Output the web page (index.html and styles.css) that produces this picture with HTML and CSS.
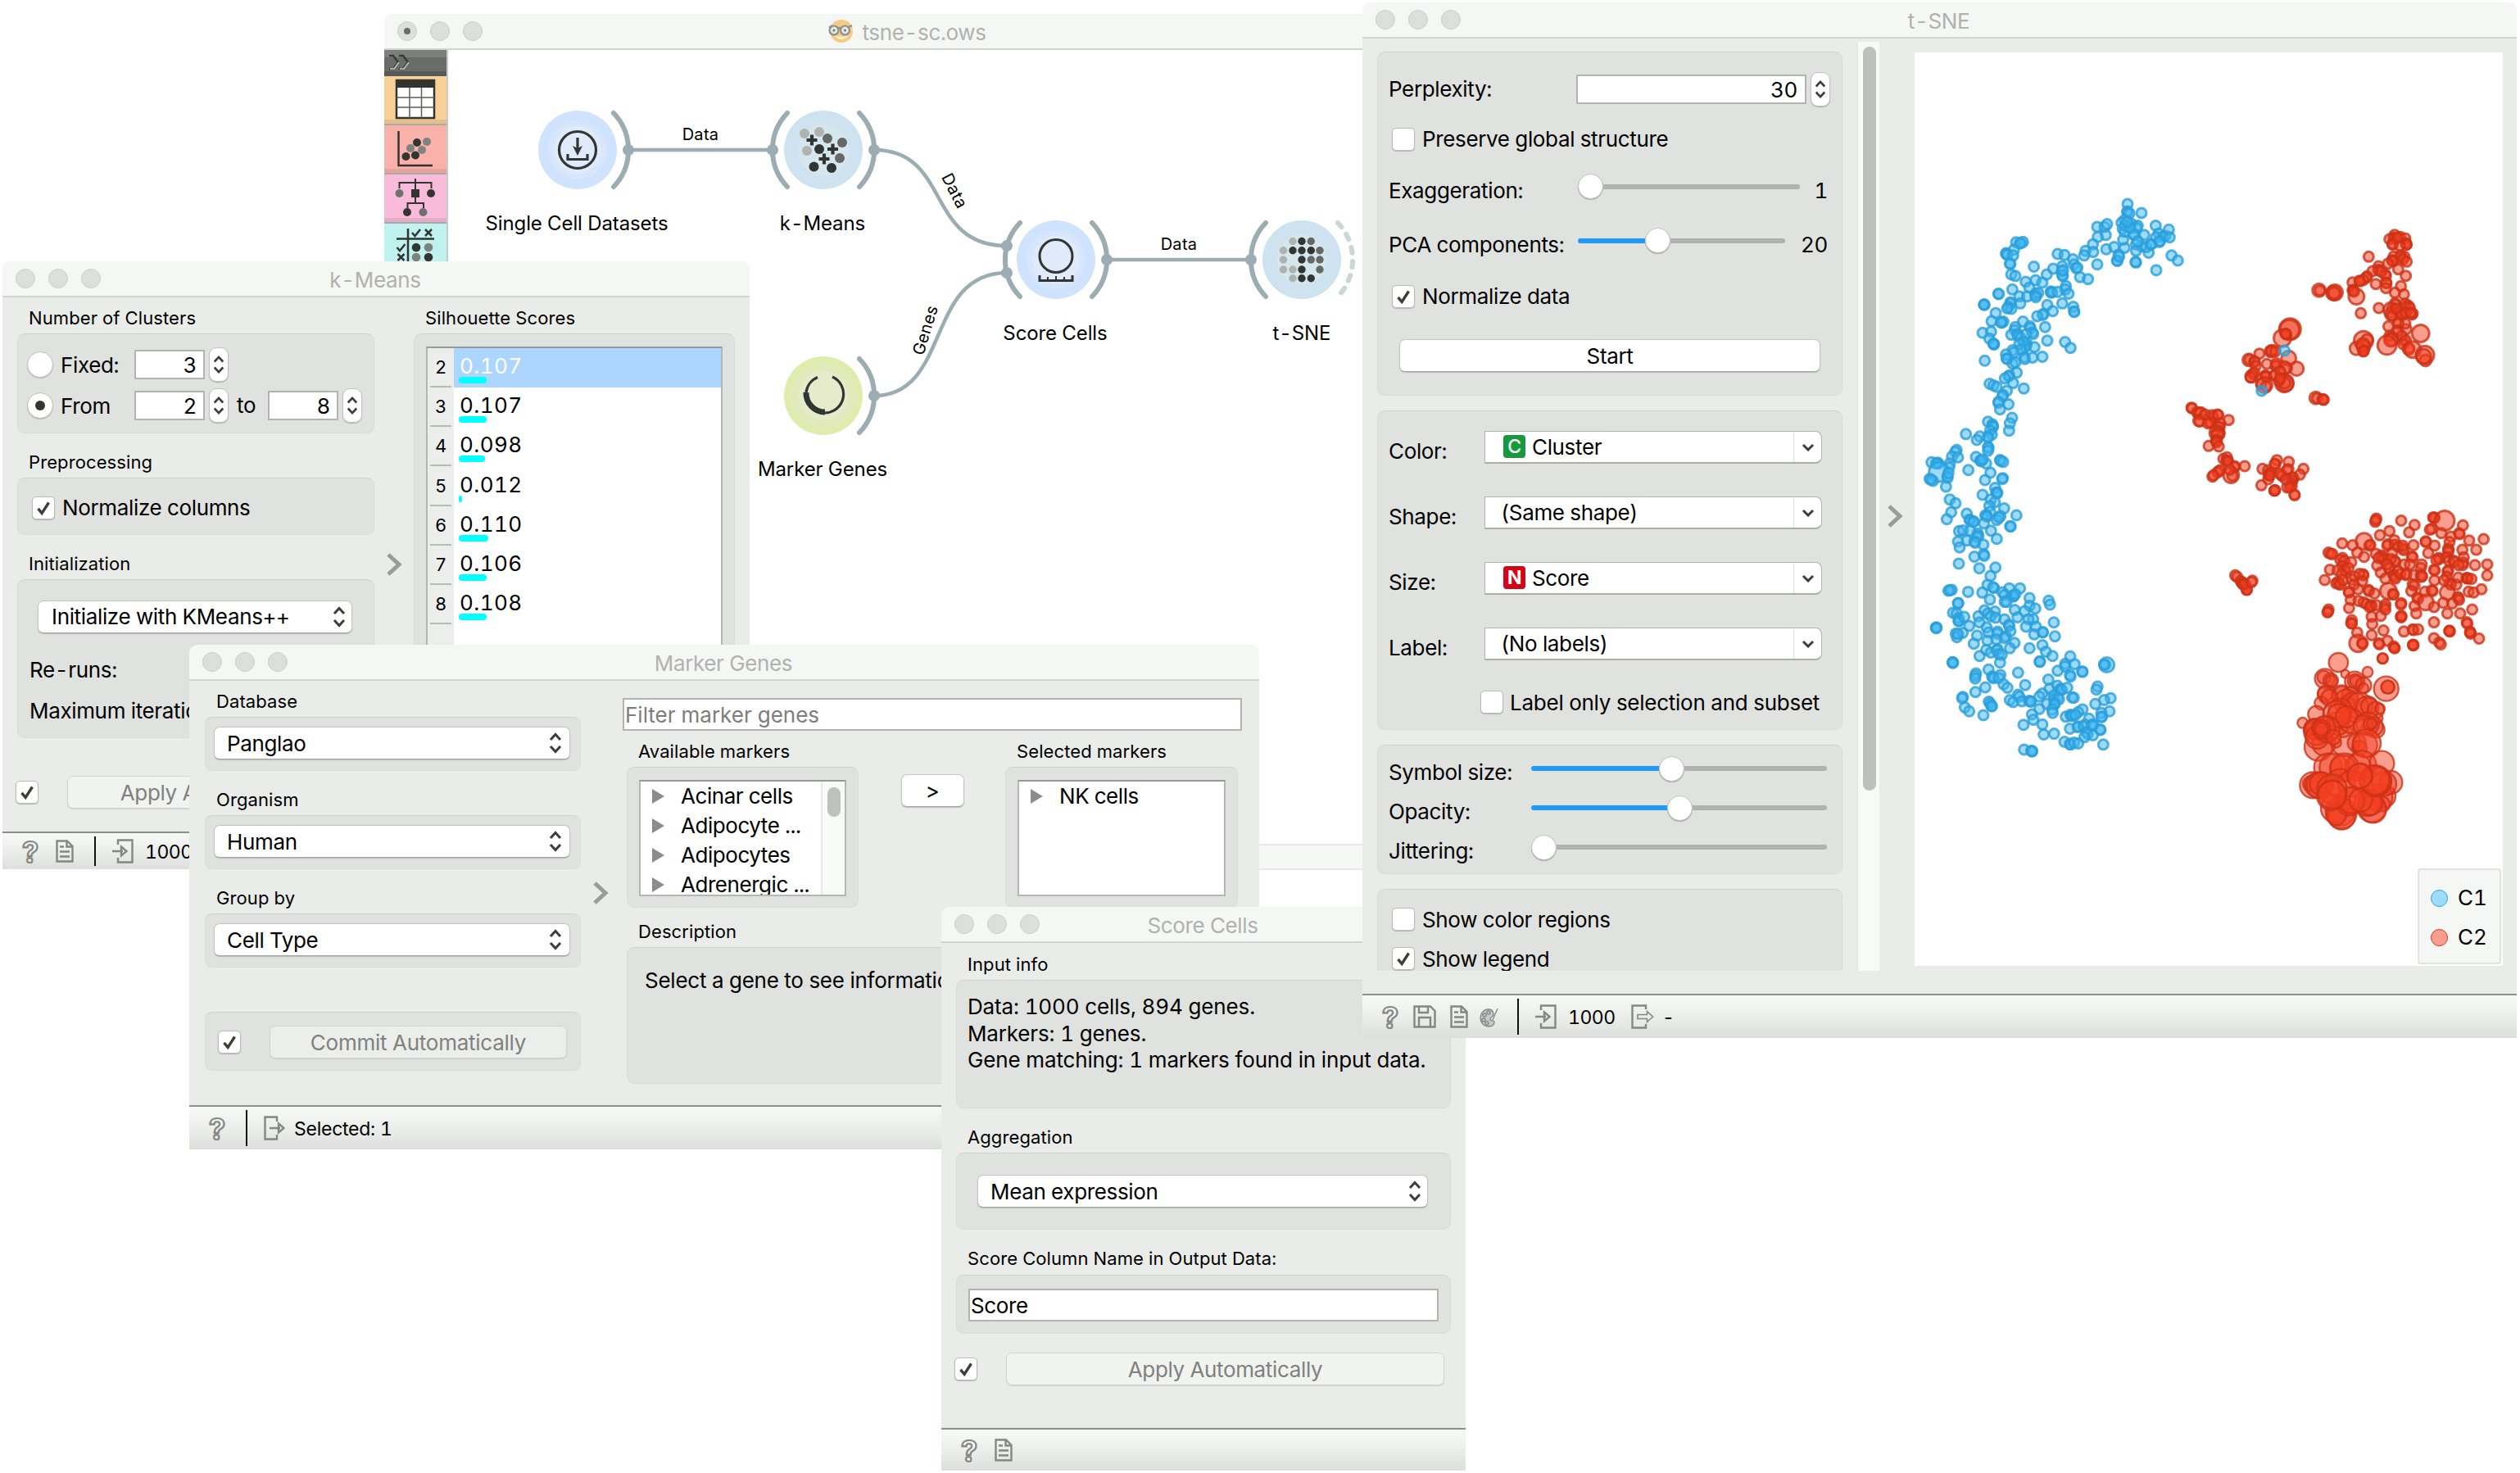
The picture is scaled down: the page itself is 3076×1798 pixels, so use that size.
FILE: index.html
```html
<!DOCTYPE html>
<html lang="en">
<head>
<meta charset="utf-8">
<title>tsne-sc.ows</title>
<link rel="stylesheet" href="styles.css">
</head>
<body>
<svg class="defs" width="0" height="0">
  <symbol id="updown" viewBox="0 0 16 26"><path d="M2 9 8 2.500 14 9M2 17 8 23.500 14 17"/></symbol>
  <symbol id="down" viewBox="0 0 16 10"><path d="M2 2 8 8 14 2"/></symbol>
  <symbol id="split" viewBox="0 0 20 30"><path d="M3 3 16 15 3 27"/></symbol>
  <symbol id="check" viewBox="0 0 28 28"><path d="M7 15 12 21 21 7"/></symbol>
  <symbol id="doc" viewBox="0 0 22 28"><path d="M1.500 1.500H14L20.500 8V26.500H1.500ZM13.500 2V8.500H20M5 8.500H10M5 14.500H17M5 20.500H17"/></symbol>
  <symbol id="save" viewBox="0 0 28 28"><path d="M1.500 1.500H21L26.500 7V26.500H1.500ZM7 2V9H18V2M7 26V15H21V26"/></symbol>
  <symbol id="import" viewBox="0 0 26 30"><path d="M7 7V1.500H24.500V28.500H7V23M0 15H13"/><path class="solid" d="M11 9.500 17.500 15 11 20.500Z"/></symbol>
  <symbol id="export" viewBox="0 0 26 30"><path d="M16 7V1.500H1.500V28.500H16V23M7 15H20"/><path class="solid" d="M18 9.500 24.500 15 18 20.500Z"/></symbol>
  <symbol id="export-empty" viewBox="0 0 28 30"><path d="M18 6V1.500H1.500V28.500H18V24"/><path class="thin" d="M8 12.500H19.500V8.500L26.500 15 19.500 21.500V17.500H8Z"/></symbol>
  <symbol id="palette" viewBox="0 0 24 26"><path d="M11 4C4 4 1 10 1 15S5 25 11 25 18 21 18 19 13 19 13 16 18 13 17 9 14 4 11 4Z" fill="#c3c8c8"/><circle cx="6" cy="11" r="2"/><circle cx="11" cy="8" r="2"/><circle cx="5" cy="17" r="2"/><circle cx="9" cy="21" r="2"/><path d="M22 3 16 17"/></symbol>
</svg>

<section class="window orange">
  <header class="titlebar"><i class="dot dirty"></i><i class="dot"></i><i class="dot"></i>
    <h1><svg class="logo" viewBox="0 0 32 28"><circle cx="17" cy="14" r="14" fill="#f8ca86"/><path d="M8 19Q17 29 26 19Q17 23 8 19Z" fill="#fff3cf"/><g fill="#e3e6e5" stroke="#8e908e" stroke-width="2.200"><circle cx="8" cy="13" r="5.500"/><circle cx="21.500" cy="13" r="5.500"/><path d="M13 11Q15 9 17 11M2 10 6 7M26 9 30 7" fill="none"/></g><circle cx="8" cy="13" r="1.500" fill="#777"/><circle cx="21.500" cy="13" r="1.500" fill="#777"/></svg>tsne-sc.ows</h1></header>
  <div class="workspace">
    <nav class="toolbox">
      <div class="expand"><svg width="28" height="20" viewBox="0 0 28 20" fill="none" stroke-width="2.500"><path d="M2 2H7L13 10 7 18H2M14 2H19L25 10 19 18H14" stroke="#3a3c39"/><path d="M3 18H8L14 10M15 18H20L26 10" stroke="#c9cbc8" stroke-width="1.500"/></svg></div>
      <div class="cat data"><svg viewBox="0 0 76 58"><rect x="15" y="5" width="46" height="46" fill="#fff" stroke="#333532" stroke-width="2.500"/><rect x="14" y="4" width="48" height="10" fill="#333532"/><path d="M31 14V51M45.500 14V51M15 26H61M15 38H61" stroke="#5c5e5b" stroke-width="1.500"/></svg></div>
      <div class="cat vis"><svg viewBox="0 0 76 58"><path d="M17.500 7V49H59" fill="none" stroke="#333532" stroke-width="2.500"/><g fill="#333532"><circle cx="40" cy="21" r="5"/><circle cx="26.500" cy="38" r="5"/><circle cx="38" cy="36.500" r="5"/></g><g fill="#80827f"><circle cx="52" cy="20" r="5"/><circle cx="32" cy="28" r="5"/><circle cx="46" cy="30" r="5"/></g></svg></div>
      <div class="cat model"><svg viewBox="0 0 76 58"><path d="M38 5V18M18.500 17V10H57.500V17M38 28V35M28.500 41V35H48V41" fill="none" stroke="#333532" stroke-width="2"/><g fill="#333532"><rect x="33" y="18" width="10" height="10"/><circle cx="57" cy="23" r="5"/><circle cx="28" cy="46" r="5"/></g><g fill="#6f716e"><circle cx="18.500" cy="23" r="5"/><circle cx="47.500" cy="46" r="5"/></g></svg></div>
      <div class="cat eval"><svg viewBox="0 0 76 58"><g fill="none" stroke="#333532" stroke-width="2.500"><path d="M29 6V50M15 18.500H61M34 11 37.500 15 44 7M50 7 58 15M58 7 50 15M15.500 29 19 33 25.500 25M16.500 37 24.500 45M24.500 37 16.500 45"/></g><g fill="#333532"><circle cx="39" cy="29" r="5.300"/><circle cx="54" cy="41" r="5.300"/></g><g fill="#80827f"><circle cx="54" cy="29" r="5.300"/><circle cx="39" cy="41" r="5.300"/></g></svg></div>
    </nav>
    <svg class="canvas" width="1140" height="969" viewBox="547 61 1140 969">
      <g class="link">
        <path d="M767 183H943M1350 317H1527M1067 183C1161 183 1129 300 1229 300M1067 483C1161 483 1129 333 1229 333"/>
      </g>
      <g class="anchor">
        <path d="M749 138A65 65 0 0 1 749 228M961 138A65 65 0 0 0 961 228M1049 138A65 65 0 0 1 1049 228M1049 438A65 65 0 0 1 1049 528M1245 272A65 65 0 0 0 1245 362M1333 272A65 65 0 0 1 1333 362M1545 272A65 65 0 0 0 1545 362"/>
        <path class="open" d="M1633 272A65 65 0 0 1 1633 362"/>
      </g>
      <g class="port"><circle cx="767" cy="183" r="7"/><circle cx="943" cy="183" r="7"/><circle cx="1067" cy="183" r="7"/><circle cx="1067" cy="483" r="7"/><circle cx="1229" cy="300" r="7"/><circle cx="1229" cy="333" r="7"/><circle cx="1351" cy="317" r="7"/><circle cx="1527" cy="317" r="7"/></g>
      <g transform="translate(705 183)"><circle r="48" fill="#cfe2fe"/><circle r="36" fill="#d7e6fc"/><circle r="29" fill="#dfebfa"/><g fill="none" stroke="#333532" stroke-width="3.200"><circle r="22.500"/><path d="M0-15V2M-12 5V11.500H12V5"/></g><path d="M-6-5 0-2 6-5 0 7Z" fill="#333532"/></g>
      <g transform="translate(1005 183)"><circle r="47.500" fill="#cee2ef" stroke="#c3e3f5"/><circle r="31" fill="#d5e6ec"/><g fill="#b0b2b0"><circle cx="-23" cy="-20" r="6"/><circle cx="-5" cy="-22" r="6"/><circle cx="-20" cy="1" r="6"/></g><g fill="#666865"><circle cx="5" cy="-14" r="6"/><circle cx="23" cy="-9" r="6"/><circle cx="20" cy="10" r="6"/></g><g fill="#333532"><circle cx="-5" cy="-1" r="6"/><circle cx="-11.500" cy="20.500" r="6"/><circle cx="10" cy="22" r="6"/></g><path d="M-20.500-12H-7.500M-14-18.500V-5.500M5-1H18M11.500-7.500V5.500M-5.500 11H7.500M1 4.500V17.500" stroke="#333532" stroke-width="4.200"/></g>
      <g transform="translate(1005 483)"><circle r="48" fill="#e0ecac"/><circle r="40" fill="#e2eabb"/><circle r="30" fill="#e5ebcb"/><path d="M-7-22.500A23 23 0 0 0-21-4M11-23A23 23 0 0 1 2 21" fill="none" stroke="#333532" stroke-width="3.200"/><path d="M-21-4A23 23 0 0 0 2 20" fill="none" stroke="#333532" stroke-width="7"/></g>
      <g transform="translate(1289 317)"><circle r="48" fill="#cfe2fe"/><circle r="36" fill="#d7e6fc"/><circle r="29" fill="#dfebfa"/><g fill="none" stroke="#333532" stroke-width="3"><circle cy="-4.500" r="20"/><path d="M-20 19V25.500H20V19"/><path d="M-10 21V25M0 20V25M10 21V25" stroke-width="2"/></g></g>
      <g transform="translate(1589 317)"><circle r="47.500" fill="#cee2ef" stroke="#c3e3f5"/><circle r="31" fill="#d5e6ec"/><g fill="#b0b2b0"><circle cx="-11" cy="-22.500" r="4.700"/><circle cx="-22.500" cy="-11.300" r="4.700"/><circle cx="-22.500" r="4.700"/><circle cx="-22.500" cy="12" r="4.700"/><circle cx="-11" cy="12" r="4.700"/><circle cx="-11" cy="22.700" r="4.700"/></g><g fill="#666865"><circle cx="11.300" cy="-22.500" r="4.700"/><circle cx="22" cy="-11.300" r="4.700"/><circle cx="11.300" r="4.700"/><circle cx="22" r="4.700"/><circle cx="22" cy="12" r="4.700"/></g><g fill="#333532"><circle cy="-22.500" r="4.700"/><circle cx="-11" cy="-11.300" r="4.700"/><circle cy="-11.300" r="4.700"/><circle cx="11.300" cy="-11.300" r="4.700"/><circle r="4.700"/><circle cy="12" r="4.700"/><circle cy="22.700" r="4.700"/><circle cx="11.300" cy="22.700" r="4.700"/></g></g>
      <g class="names"><text x="704" y="281">Single Cell Datasets</text><text x="1004" y="281">k-Means</text><text x="1288" y="415">Score Cells</text><text x="1589" y="415">t-SNE</text><text x="1004" y="581">Marker Genes</text></g>
      <g class="channels"><text x="855" y="171">Data</text><text x="1439" y="305">Data</text><text transform="translate(1159 236) rotate(63)">Data</text><text transform="translate(1136 405) rotate(-73)">Genes</text></g>
    </svg>
  </div>
  <footer class="canvasbar"></footer>
</section>

<section class="window kmeans">
  <header class="titlebar"><i class="dot"></i><i class="dot"></i><i class="dot"></i><h1>k-Means</h1></header>
  <div class="panes">
    <div class="left">
      <h2 class="first">Number of Clusters</h2>
      <div class="group clusters">
        <div class="row"><i class="radio"></i><span class="rl">Fixed:</span><b class="field num">3</b><i class="stepper"><svg><use href="#updown"/></svg></i></div>
        <div class="row"><i class="radio on"></i><span class="rl">From</span><b class="field num">2</b><i class="stepper"><svg><use href="#updown"/></svg></i><span class="to">to</span><b class="field num">8</b><i class="stepper"><svg><use href="#updown"/></svg></i></div>
      </div>
      <h2>Preprocessing</h2>
      <div class="group pre"><i class="box"><svg><use href="#check"/></svg></i><span>Normalize columns</span></div>
      <h2>Initialization</h2>
      <div class="group init"><div class="select">Initialize with KMeans++<svg><use href="#updown"/></svg></div><p>Re-runs:</p><p>Maximum iterations:</p></div>
      <div class="auto"><i class="box"><svg><use href="#check"/></svg></i><div class="button off">Apply Automatically</div></div>
    </div>
    <svg class="splitter"><use href="#split"/></svg>
    <div class="right">
      <h2 class="first">Silhouette Scores</h2>
      <div class="group scores"><div class="table">
        <div class="tr sel"><b>2</b><span>0.107<i style="width:34px"></i></span></div>
        <div class="tr"><b>3</b><span>0.107<i style="width:34px"></i></span></div>
        <div class="tr"><b>4</b><span>0.098<i style="width:32px"></i></span></div>
        <div class="tr"><b>5</b><span>0.012<i style="width:4px"></i></span></div>
        <div class="tr"><b>6</b><span>0.110<i style="width:36px"></i></span></div>
        <div class="tr"><b>7</b><span>0.106<i style="width:34px"></i></span></div>
        <div class="tr"><b>8</b><span>0.108<i style="width:34px"></i></span></div>
        <div class="rest"></div>
      </div></div>
    </div>
  </div>
  <footer class="status"><span class="help">?</span><svg class="i-doc"><use href="#doc"/></svg><i class="sep"></i><svg class="i-io"><use href="#import"/></svg><span>1000</span></footer>
</section>

<section class="window marker">
  <header class="titlebar"><i class="dot"></i><i class="dot"></i><i class="dot"></i><h1>Marker Genes</h1></header>
  <div class="panes">
    <div class="left">
      <h2 class="first">Database</h2><div class="group one"><div class="select">Panglao<svg><use href="#updown"/></svg></div></div>
      <h2>Organism</h2><div class="group one"><div class="select">Human<svg><use href="#updown"/></svg></div></div>
      <h2>Group by</h2><div class="group one"><div class="select">Cell Type<svg><use href="#updown"/></svg></div></div>
      <div class="group commit"><i class="box"><svg><use href="#check"/></svg></i><div class="button off">Commit Automatically</div></div>
    </div>
    <svg class="splitter"><use href="#split"/></svg>
    <div class="right">
      <div class="field filter">Filter marker genes</div>
      <div class="lists">
        <div class="avail"><h3>Available markers</h3><div class="group lg"><div class="list"><ul><li>Acinar cells</li><li>Adipocyte ...</li><li>Adipocytes</li><li>Adrenergic ...</li></ul><div class="track"><i></i></div></div></div></div>
        <div class="button move">&gt;</div>
        <div class="chosen"><h3>Selected markers</h3><div class="group lg"><div class="list"><ul><li>NK cells</li></ul></div></div></div>
      </div>
      <h3 class="desc">Description</h3>
      <div class="group info">Select a gene to see information</div>
    </div>
  </div>
  <footer class="status"><span class="help">?</span><i class="sep"></i><svg class="i-io"><use href="#export"/></svg><span class="selcount">Selected: 1</span></footer>
</section>

<section class="window score">
  <header class="titlebar"><i class="dot"></i><i class="dot"></i><i class="dot"></i><h1>Score Cells</h1></header>
  <div class="body">
    <h2 class="first">Input info</h2>
    <div class="group input">Data: 1000 cells, 894 genes.<br>Markers: 1 genes.<br>Gene matching: 1 markers found in input data.</div>
    <h2>Aggregation</h2>
    <div class="group agg"><div class="select">Mean expression<svg><use href="#updown"/></svg></div></div>
    <h2 class="wide">Score Column Name in Output Data:</h2>
    <div class="group col"><div class="field">Score</div></div>
    <div class="auto"><i class="box"><svg><use href="#check"/></svg></i><div class="button off">Apply Automatically</div></div>
  </div>
  <footer class="status"><span class="help">?</span><svg class="i-doc"><use href="#doc"/></svg></footer>
</section>

<section class="window tsne">
  <header class="titlebar"><i class="dot"></i><i class="dot"></i><i class="dot"></i><h1>t-SNE</h1></header>
  <div class="panes">
    <div class="controls">
      <div class="group g1">
        <div class="row r1"><span>Perplexity:</span><b class="field num">30</b><i class="stepper"><svg><use href="#updown"/></svg></i></div>
        <div class="row chk r2"><i class="box"></i><span>Preserve global structure</span></div>
        <div class="row r3"><span class="lb">Exaggeration:</span><div class="slider exag"><i class="fill" style="width:0"></i><i class="thumb"></i><i class="trk"></i></div><span class="val">1</span></div>
        <div class="row r4"><span class="lb">PCA components:</span><div class="slider pca"><i class="fill" style="width:82px"></i><i class="thumb"></i><i class="trk"></i></div><span class="val">20</span></div>
        <div class="row chk r5"><i class="box"><svg><use href="#check"/></svg></i><span>Normalize data</span></div>
        <div class="button start">Start</div>
      </div>
      <div class="group g2">
        <div class="row"><span>Color:</span><div class="combo"><em class="c">C</em>Cluster<i><svg><use href="#down"/></svg></i></div></div>
        <div class="row"><span>Shape:</span><div class="combo plain">(Same shape)<i><svg><use href="#down"/></svg></i></div></div>
        <div class="row"><span>Size:</span><div class="combo"><em class="n">N</em>Score<i><svg><use href="#down"/></svg></i></div></div>
        <div class="row"><span>Label:</span><div class="combo plain">(No labels)<i><svg><use href="#down"/></svg></i></div></div>
        <div class="row only"><i class="box"></i><em>Label only selection and subset</em></div>
      </div>
      <div class="group g3">
        <div class="row"><span>Symbol size:</span><div class="slider"><i class="fill" style="width:156px"></i><i class="thumb"></i><i class="trk"></i></div></div>
        <div class="row"><span>Opacity:</span><div class="slider"><i class="fill" style="width:166px"></i><i class="thumb"></i><i class="trk"></i></div></div>
        <div class="row"><span>Jittering:</span><div class="slider"><i class="fill" style="width:0"></i><i class="thumb"></i><i class="trk"></i></div></div>
      </div>
      <div class="group g4">
        <div class="row chk"><i class="box"></i><span>Show color regions</span></div>
        <div class="row chk"><i class="box"><svg><use href="#check"/></svg></i><span>Show legend</span></div>
      </div>
    </div>
    <div class="vscroll"><i></i></div>
    <svg class="splitter"><use href="#split"/></svg>
    <div class="plot">
      <svg id="points" width="718" height="1115" viewBox="2337 64 718 1115"></svg>
      <div class="legend"><div><i class="c1"></i>C1</div><div><i class="c2"></i>C2</div></div>
    </div>
  </div>
  <footer class="status"><span class="help">?</span><svg class="i-save"><use href="#save"/></svg><svg class="i-doc"><use href="#doc"/></svg><svg class="i-pal"><use href="#palette"/></svg><i class="sep"></i><svg class="i-io"><use href="#import"/></svg><span class="cnt">1000</span><svg class="i-io2"><use href="#export-empty"/></svg><span>-</span></footer>
</section>
<script src="script.js"></script>
</body>
</html>
```
FILE: styles.css
```css
* { box-sizing: border-box; }
html, body { margin: 0; }
body { position: relative; width: 3076px; height: 1798px; overflow: hidden; background: #fff; color: #000; font: 400 26px/32px Inter, "Liberation Sans", sans-serif; font-variant-numeric: tabular-nums; letter-spacing: -0.35px; }
i, em { font-style: normal; }
b { font-weight: 400; }
i { display: block; flex: none; }
p, h1, h2, h3, ul { margin: 0; padding: 0; font-weight: 400; }
svg { display: block; flex: none; }
.defs { position: absolute; }

/* windows on the desktop */
.window { position: absolute; display: flex; flex-direction: column; overflow: hidden; background: #eaece9; border-radius: 10px 10px 0 0; white-space: nowrap; }
.orange { left: 469px; top: 17px; width: 1230px; height: 1045px; background: #fff; }
.kmeans { left: 3px; top: 319px; width: 912px; height: 742px; }
.marker { left: 231px; top: 787px; width: 1306px; height: 616px; }
.score { left: 1149px; top: 1107px; width: 640px; height: 688px; }
.tsne { left: 1663px; top: 3px; width: 1409px; height: 1264px; }
.titlebar { display: grid; grid-template-columns: 24px 24px 24px 1fr; column-gap: 16px; flex: none; align-items: center; height: 44px; padding-left: 16px; background: #f5f7f4; border-bottom: 2px solid #d2d4d1; }
.titlebar h1 { display: flex; justify-content: center; align-items: center; margin-left: -138px; padding-top: 3px; font-size: 26px; color: #b0b2af; }
.dot { width: 24px; height: 24px; border-radius: 50%; background: #dddfdc; border: 1px solid #ccceca; }
.dirty { padding: 7px; }
.dirty::after { content: ""; display: block; width: 8px; height: 8px; border-radius: 50%; background: #6b6d6a; }
.orange .titlebar h1 { margin-left: -90px; }
.logo { width: 32px; height: 28px; margin-right: 10px; margin-top: -3px; }
.panes { display: flex; flex: 1; min-height: 0; }

.status { display: flex; flex: none; align-items: center; height: 46px; border-top: 2px solid #8c8e8b; background: linear-gradient(#f8faf7, #e9ebe8 60%, #dddfdc); font-size: 23px; letter-spacing: -0.5px; }
.marker .status { height: 54px; }
.score .status { height: 52px; }
.tsne .status { height: 54px; }
.status span { padding-top: 1px; }
.status svg { fill: none; stroke: #858784; stroke-width: 2.4px; }
.status .solid { fill: #6d6f6c; stroke: none; }
.thin { stroke-width: 1.6px; }
.help { width: 20px; margin-left: 24px; font-weight: 700; font-size: 36px; color: #f0f2ef; -webkit-text-stroke: 2.2px #858784; }
.i-doc { width: 22px; height: 28px; margin-left: 21px; }
.i-io { width: 26px; height: 30px; margin-left: 20px; margin-right: 14px; }
.sep { width: 2px; height: 44px; background: #111; margin-left: 25px; }
.kmeans .sep { height: 36px; }
.marker .i-io { margin-right: 11px; }
.selcount { letter-spacing: -0.25px; }
.i-save { width: 28px; height: 28px; margin-left: 18px; }
.tsne .i-doc { margin-left: 17px; }
.i-pal { width: 24px; height: 26px; margin-left: 14px; }
#palette * { stroke-width: 1.3px; }
.tsne .sep { margin-left: 22px; }
.cnt { width: 63px; }
.i-io2 { width: 28px; height: 30px; margin: 0 10px 0 14px; }

/* shared controls */
.group { background: #e0e2df; border: 1px solid #d9dbd8; border-top-color: #d0d2cf; border-radius: 9px; }
h2 { height: 54px; padding: 22px 0 0 14px; font-size: 22px; line-height: 27px; letter-spacing: .1px; }
h2.first { height: 44px; padding-top: 12px; }
h3 { font-size: 22px; line-height: 26px; letter-spacing: .1px; }
.row { display: flex; align-items: center; }
.field { background: #fff; border: 2px solid #b2b4b1; }
.num { display: block; height: 36px; line-height: 33px; text-align: right; padding-right: 8px; }
.stepper { display: flex; align-items: center; justify-content: center; width: 24px; height: 42px; margin-left: 5px; border-radius: 9px; background: #fff; border: 1px solid #c0c2bf; box-shadow: 0 1px 1px #b0b2af; }
.stepper svg { width: 14px; height: 26px; }
.stepper svg, .select svg, .combo svg, .box svg { fill: none; stroke: #3c3e3b; stroke-width: 3px; }
.radio { width: 32px; height: 32px; border-radius: 50%; background: #fff; border: 1px solid #bfc1be; box-shadow: 0 1px 1px #b5b7b4; }
.radio.on { padding: 9px; }
.radio.on::after { content: ""; display: block; width: 12px; height: 12px; border-radius: 50%; background: #333532; }
.box { width: 28px; height: 28px; border-radius: 5px; background: #fff; border: 1px solid #b9bbb8; box-shadow: 0 1px 1px #b5b7b4; }
.box svg { width: 26px; height: 26px; stroke-width: 3.6px; }
.select { display: flex; justify-content: space-between; align-items: center; height: 40px; padding: 1px 9px 0 15px; border-radius: 7px; background: #fff; border: 1px solid #c4c6c3; border-bottom-color: #a5a7a4; box-shadow: 0 1px 1px #b9bbb8; }
.select svg { width: 16px; height: 26px; margin-top: -1px; }
.button { height: 40px; line-height: 39px; text-align: center; border-radius: 7px; background: #fff; border: 1px solid #c4c6c3; border-bottom-color: #a5a7a4; box-shadow: 0 1px 1px #b9bbb8; }
.button.off { background: #f1f3f0; color: #7f817e; border-color: #d3d5d2; box-shadow: 0 1px 1px #cfd1ce; }
.group .button.off { background: #eceeeb; }
.splitter { width: 20px; height: 30px; fill: none; stroke: #9a9c99; stroke-width: 5px; }

/* workflow editor */
.workspace { display: flex; flex: none; height: 969px; }
.toolbox { width: 78px; border-right: 2px solid #c6cbcc; }
.expand { height: 32px; padding: 5px 0 0 4px; background: linear-gradient(#7d7f7c 9px, #6a6c69 9px 26px, #585a57 26px); }
.cat { height: 60px; border-bottom: 2px solid #a9aba8; box-shadow: inset 0 -5px rgba(0, 0, 0, .08); }
.cat svg { width: 76px; height: 58px; }
.data { background: #f9d095; } .vis { background: #fab1a9; } .model { background: #f9bbda; } .eval { background: #c0f3f0; }
.canvasbar { flex: 1; background: #f6f8f5; border-top: 2px solid #e7e9e6; border-bottom: 2px solid #e7e9e6; }
.link, .anchor { fill: none; stroke: #9cacb3; stroke-width: 4.5px; }
.anchor { stroke-width: 6px; stroke-linecap: round; }
.anchor .open { stroke: #ccd5d8; stroke-dasharray: 7 10.2; }
.port { fill: #9cacb3; }
.names { font-size: 24px; text-anchor: middle; letter-spacing: -.1px; }
.channels { font-size: 20px; text-anchor: middle; letter-spacing: .3px; }

/* k-Means */
.kmeans .left { width: 454px; padding-left: 18px; }
.clusters { height: 122px; padding: 12px 0 0 11px; }
.clusters .row { height: 50px; }
.rl { width: 99px; padding: 1px 0 0 9px; }
.clusters .num { width: 86px; }
.to { width: 48px; padding-left: 10px; }
.pre { display: flex; align-items: center; gap: 9px; height: 70px; padding: 3px 0 0 17px; }
.init { height: 194px; padding: 25px 0 0 14px; }
.init .select { width: 384px; margin: 0 0 20px 10px; padding: 0 7px 0 16px; }
.init p { height: 50px; line-height: 50px; }
.kmeans .auto { display: flex; align-items: center; margin: 46px 0 0 -2px; }
.kmeans .auto .button { width: 367px; margin-left: 35px; }
.kmeans .splitter { margin: 311px 0 0 14px; }
.kmeans .right { width: 392px; margin-left: 14px; }
.scores { height: 580px; padding: 15px 14px; }
.table { height: 560px; display: flex; flex-direction: column; border: 2px solid #b5b7b4; border-top-color: #979996; background: #fff; }
.tr { display: flex; height: 48.2px; flex: none; }
.tr b { width: 32px; background: #eceeeb; font-size: 22px; line-height: 46px; text-align: center; padding: 0 3px; }
.tr b::after { content: ""; display: block; height: 2px; background: #b9bbb8; }
.tr span { flex: 1; padding: 6px 0 0 7px; letter-spacing: .4px; }
.tr span i { height: 8px; margin: -3px 0 0 -1px; border-radius: 4px; background: #0ff; }
.tr.sel span { background: #acd6ff; color: #fff; }
.rest { width: 32px; flex: 1; background: #eceeeb; }

/* Marker Genes */
.marker .left { width: 478px; padding-left: 19px; }
.one { height: 66px; padding: 11px 12px 0 10px; }
.commit { display: flex; align-items: center; height: 72px; margin-top: 54px; padding: 1px 0 0 15px; }
.commit .button { width: 363px; margin-left: 35px; letter-spacing: -.25px; }
.marker .splitter { margin: 244px 0 0 14px; }
.marker .right { margin-left: 17px; }
.filter { width: 756px; height: 40px; line-height: 38px; padding-left: 1px; margin-top: 21px; color: #7c7e7b; letter-spacing: 0; }
.lists { display: flex; padding-left: 5px; margin-top: 12px; }
.lists h3 { height: 32px; padding-left: 14px; }
.lg { height: 172px; padding: 15px 14px 0; }
.avail { width: 283px; }
.chosen { width: 284px; margin-left: 50px; }
.list { display: flex; justify-content: space-between; height: 142px; overflow: hidden; background: #fff; border: 2px solid #b5b7b4; border-top-color: #979996; }
.list ul { list-style: none; }
.list li { display: flex; align-items: center; height: 36px; letter-spacing: -.45px; }
.list li::before { content: ""; border: solid transparent; border-width: 9px 0 9px 15px; border-left-color: #8b8d8a; margin: 0 20px 0 14px; }
.track { width: 29px; padding: 7px 0 0 6px; background: #f8faf7; border-left: 2px solid #e7e9e6; }
.track i { width: 16px; height: 36px; border-radius: 8px; background: #bfc1be; }
.move { width: 77px; margin: 41px 0 0 52px; }
.desc { padding-left: 19px; margin: 16px 0 6px; }
.info { width: 746px; height: 167px; margin-left: 5px; padding: 24px 21px; letter-spacing: -.25px; }

/* Score Cells */
.body { flex: 1; padding: 0 18px; }
.input { height: 157px; padding: 16px 13px; line-height: 32.5px; letter-spacing: -.15px; }
.score .first { height: 45px; padding-top: 13px; }
.agg { height: 94px; padding: 26px 27px 0 25px; }
.agg .select { padding-right: 7px; }
.score h2.wide { height: 55px; letter-spacing: .1px; }
.col { height: 72px; padding: 16px 14px; }
.col .field { height: 40px; line-height: 38px; padding-left: 1px; }
.score .auto { display: flex; align-items: center; margin: 23px 0 0 -2px; }
.score .auto .button { width: 535px; margin-left: 35px; }

/* t-SNE */
.controls { width: 604px; height: 1138px; padding: 16px 18px 0; overflow: hidden; }
.controls .group { margin-bottom: 18px; padding-left: 13px; }
.g1 { height: 420px; }
.r1 { height: 60px; margin-top: 15px; }
.r1 span { width: 229px; } .r1 .num { width: 281px; padding-right: 9px; }
.chk { padding-left: 4px; } .chk span { padding: 1px 0 0 9px; }
.r2 { height: 61px; } .r3 { height: 64px; } .r4 { height: 68px; } .r5 { height: 59px; }
.lb { width: 231px; padding-top: 2px; }
.slider { display: flex; align-items: center; margin-bottom: 9px; }
.exag { width: 271px; } .pca { width: 253px; }
.val { flex: 1; text-align: right; padding: 1px 17px 0 0; }
.fill { height: 6px; border-radius: 3px 0 0 3px; background: #1f99fb; }
.thumb { width: 31px; height: 31px; border-radius: 50%; background: #fff; border: 1px solid #c3c5c2; box-shadow: 0 1px 1px #a9aba8; }
.trk { flex: 1; height: 6px; border-radius: 0 3px 3px 0; background: #b0b2af; }
.start { width: 514px; margin: 23px 0 0 13px; }
.g2 { height: 390px; padding-top: 4px; }
.g2 .row { height: 80px; }
.g2 span { width: 117px; padding-top: 9px; }
.combo { display: flex; align-items: center; width: 412px; height: 40px; padding: 1px 0 0 22px; background: #fff; border: 1px solid #b2b4b1; border-bottom: 2px solid #abada9; border-radius: 0 8px 8px 0; }
.combo.plain { padding-left: 19px; }
.combo i { display: flex; align-items: center; justify-content: center; width: 34px; height: 100%; margin-left: auto; border-left: 1px solid #dcdedb; }
.combo svg { width: 16px; height: 10px; }
.combo em { width: 27px; height: 28px; margin: -2px 8px 0 0; border-radius: 4px; color: #fff; font-size: 23px; font-weight: 500; line-height: 28px; text-align: center; }
.combo .c { background: #179a3d; } .combo .n { background: #d40519; font-weight: 700; }
.g2 .only { height: 62px; padding-left: 112px; } .only em { padding: 2px 0 0 8px; letter-spacing: -.25px; }
.g3 { height: 158px; padding-top: 6px; } .g3 .row, .g4 .row { height: 48px; }
.g3 span { width: 174px; padding-top: 5px; } .g3 .slider { width: 361px; margin-bottom: 4px; }
.g4 { height: 158px; padding-top: 12px; }
.vscroll { width: 27px; height: 1134px; margin-top: 4px; padding: 6px 0 0 6px; background: #f8faf7; border-left: 1px solid #e2e4e1; }
.vscroll i { width: 16px; height: 908px; border-radius: 8px; background: #bec0bd; }
.tsne .splitter { margin: 568px 0 0 9px; }
.plot { position: relative; width: 718px; height: 1115px; margin: 17px 0 0 14px; background: #fff; }
.legend { position: absolute; right: 2px; bottom: 2px; width: 102px; height: 117px; padding: 10px 0 0 14px; background: #f5f7f4; border: 2px solid #e1e3e0; border-radius: 4px; letter-spacing: 0; }
.legend div { display: flex; align-items: center; gap: 12px; height: 48px; }
.legend i { width: 21px; height: 21px; border-radius: 50%; }
.c1 { background: #9edbfa; border: 1.5px solid #2ba0db; } .c2 { background: #f99e8f; border: 1.5px solid #cf3317; }
.blue circle { fill: rgba(61, 183, 245, .5); stroke: rgba(42, 159, 217, .8); stroke-width: 3px; }
.red circle { fill: rgba(243, 61, 31, .5); stroke: rgba(205, 50, 22, .8); stroke-width: 3px; }
.red.large circle { stroke-width: 2.4px; }
```
FILE: script.js
```js
// Embedding coordinates per block: origin, units per pixel on each axis, then "x,y[,radius]".
const blocks = [
  { cls: 'blue', x0: 2330, y0: 200, sx: 3, sy: 2.119, pts: `
801,104 852,127 800,123 800,125 790,145 779,152 808,128 690,163 717,163 726,156 721,184 692,189 674,208 647,225 642,237 675,228 723,221 690,260
752,215 768,235 764,251 762,250 770,240 790,217 785,196 783,168 790,176 792,160 815,155 838,160 834,166 825,184 823,182 862,184 850,213 832,208 832,225 832,255 830,254 878,230 870,215 886,209 889,207
904,160 915,180 905,190 930,188 917,202 920,200 940,186 952,170 955,190 962,237 985,250 906,275 810,165 800,150 838,200
393,203 418,202 406,206 410,205 385,222 356,231 357,233 360,235 382,237 372,259 370,258 375,286 390,290 458,266 428,305 441,320 464,301 489,307 505,286 529,271 545,233 570,236 601,247 605,260 613,270 617,268 562,265 560,278 562,288 564,290 565,275 627,293 656,298 575,316 573,325 585,336 562,361
379,325 329,337 328,336 276,364 277,365 275,364 318,386 303,407 346,408 340,411 338,410 405,343 408,361 372,358 372,361 365,370 375,375 360,374 433,343 464,336 464,340 474,334 465,345 520,330 521,333 525,332 545,331 507,365 527,381 493,388 490,391 470,394 602,370 605,382 606,383 499,422
270,437 301,434 295,452 311,466 312,467 309,465 278,509 418,408 390,422 388,430 375,442 398,440 400,445 410,450 443,420 445,425 452,436 455,440 430,440 432,465 430,470 425,475 420,460 405,465 410,480 460,474 507,457 572,461 592,476 380,482 385,488 356,493 358,503 360,505 424,500 425,505 453,501 489,499 380,517 390,514
395,540 368,547 365,550 352,555 382,567 421,581 296,569 310,573 322,577 359,587 345,598 343,601 329,615 328,618 334,635 365,622 378,657 370,671 367,690
290,667 306,674 307,678 308,680 298,690 304,700 289,705 290,708 260,705 249,714 209,699 290,732 292,735 290,742 283,775 246,758 262,767 264,769 270,765 334,766 336,768 345,771 299,799 279,818 344,813 342,815
175,740 170,745 158,757 180,759 150,775 148,785 83,772 105,773 108,775 100,775 110,797,12 76,815 88,820 82,817 141,808 142,812 145,800 218,792 136,835 150,868 171,878 155,901 139,919 212,905
316,838 320,850 322,852 324,851 300,868 315,875 270,856 295,885 349,891 394,909 298,900 280,909 285,911 286,912 335,911 322,921 330,915 371,937 373,938 275,930 222,920 225,923 238,925 236,926 301,949 322,970 184,950 198,948 225,949 252,956 255,962 250,965 180,977 186,992 213,974 240,977 243,980 273,985 183,1034 240,1016 274,1010 276,1014 258,1046 317,1044 299,1066
288,1089 312,1097 308,1095 269,1109 217,1107 157,1102 145,1104 150,1103 297,1127 181,1136 180,1137 162,1161 175,1163 182,1175 184,1182 182,1183 203,1172 221,1195 101,1199 99,1200 101,1201 172,1215 176,1224 197,1213 180,1216
368,1098 407,1098 343,1108 350,1115 378,1117 382,1119 384,1118 390,1113 351,1133 358,1133 442,1123 442,1143 463,1150 388,1154 398,1173 424,1157 512,1130 517,1140 277,1155 255,1170 290,1163 315,1158 300,1170 318,1174 259,1186 285,1199 350,1178 366,1192 368,1195 372,1209 292,1212 325,1210 324,1215 355,1222 350,1227 320,1230 250,1220 238,1241 288,1233 387,1239 370,1253 283,1257 300,1264 325,1255 322,1258 330,1268 340,1270 259,1273 334,1290 455,1178 438,1178 429,1197 465,1197 459,1217 490,1211 491,1212 531,1186 535,1222 442,1253 489,1245 502,1262 526,1273 480,1287 479,1288 160,1289 162,1290 161,1291
292,1308 246,1318 243,1324 243,1331 335,1322 305,1326 308,1328 310,1330 330,1330 347,1346 361,1355 280,1354 244,1366 400,1316 426,1348 198,1379 195,1382 205,1406 221,1416 293,1391 298,1396 303,1402 304,1403 273,1426 370,1387 382,1392 400,1373 405,1378 414,1390 440,1389 445,1390 447,1391
591,1274 573,1293 572,1300 607,1294 545,1311 511,1334 590,1322 592,1326 635,1313 636,1314 720,1296 725,1296,9 715,1295 515,1358 544,1350 555,1358 558,1360 560,1361 580,1355 489,1370 478,1378 530,1375 532,1385 545,1380 550,1385 598,1380 604,1381 532,1396 534,1398 505,1397 525,1412 527,1420 478,1410 451,1424 456,1438 420,1451 489,1450 494,1476 532,1474 691,1352 687,1360 739,1382 715,1387 683,1397 735,1416 705,1420 707,1430 705,1431 636,1411 620,1418 575,1430 592,1425 595,1427 600,1428 610,1425 660,1435 645,1450 590,1461 620,1455 618,1457 640,1455 674,1450 670,1453 675,1452 700,1463 702,1464 650,1470 655,1475 674,1478 643,1483 712,1502 570,1495 590,1500 592,1502 605,1497 620,1499 422,1515 448,1518 452,1519 451,1520` },
  { cls: 'red', x0: 2640, y0: 250, sx: 3, sy: 3, pts: `
849,110 845,120 850,122 852,124 830,126 870,118 888,123 890,140 893,145 892,146 841,143 842,146 868,150 860,120 754,190 845,190 840,203 843,206 842,205 870,185 872,190 885,190 880,200 893,208 862,236 790,225 788,238 792,240 768,243 748,262 745,266 735,275 695,284 720,278 722,280 780,290 815,255 817,260 818,285 819,287 817,305 800,245 825,215 890,260 872,298 850,322 883,328
695,313 697,312 709,336,9.5 700,318 572,313,8 575,314 626,323,9 630,321,9.5 627,323,7 725,397 791,378
850,360 852,365 888,362 890,372 900,370 905,378 840,380 835,385,9 838,400,8 840,405 865,390 870,400 875,405 855,380 915,398 912,402 890,395 908,395 826,445 862,430 863,435 862,460 858,465 892,455 888,435 830,480 840,492,8 835,495,8 875,480 885,500 890,495 880,510 902,525 900,528,7 944,471,10.5 821,514,11.5 915,530,10 960,550,11 962,570,7 955,555,9
735,497,11.5 748,495,7 709,526,8 735,520,8 733,512,8 734,537 736,535
466,455,13 464,457,12 438,488,10.5 452,474 450,472 354,545 395,537,7 398,536 400,535,7 412,537 461,562,9 490,600,8.5 455,598 445,597,8 315,568,7.5 318,567 335,573 337,575 340,590 381,583 413,588 415,590 415,580 330,620 325,628,7.5 335,615 322,632 375,625 378,630 376,628 408,625 412,622 430,610 445,653,11 448,653,10 446,652,7 425,645 360,655 372,660,9.5 378,665 430,635
560,707,7.5 565,708 585,712 588,713 589,714
105,743 107,745 125,760 135,765,7 138,763,7 133,790,7 135,793 155,768 180,770 185,778 200,768 203,770 173,797 175,798 165,800 210,800 208,815 205,812 241,788 198,835,9 202,838,8 200,842,7 198,860 195,865 197,870 168,883 205,885
222,930 235,925 236,937 234,938 240,940 264,958 262,960 300,957 205,975 200,980 210,972 182,995 186,990 250,990,9.5 255,993 245,970
418,935 412,950 410,948 461,941 365,967 385,972 390,985 388,990 395,980 386,1005 392,992 435,990 437,993 430,985 460,968 455,970 478,1000 476,998 475,1010 515,967 502,988 470,1020 472,1030 455,1035 465,1035 450,1005 361,1027 408,1047 411,1045 410,1046 482,1062 483,1063` },
  { cls: 'red', x0: 2640, y0: 600, sx: 3, sy: 2.306, pts: `
265,236 272,240 285,252 290,258 292,256 295,262 305,268 307,277 308,276 328,251 300,260 325,255
782,76 778,85 780,80 873,82 922,94 902,115 830,111 795,123 848,137 737,140,10 757,152 760,150 657,146 695,151 712,172 737,184 607,172 615,175 621,176 658,187 650,192 665,195 690,199 612,220 593,249 657,210 668,220 665,222 640,222 655,232 680,215 640,255 645,260 635,258 650,262 660,250 692,248 703,240 733,233 735,236 720,232 730,252 700,262 715,275 681,282 682,284 688,305 682,328 717,308 735,312 745,316 753,277 755,280 775,287 762,320 764,322 757,325 782,320 765,352 798,350 815,318 812,325 815,332 826,280,10 843,288 845,290 692,362 690,370 692,372 767,373 765,404 712,397 808,391 607,332 605,338 603,340 715,427,10.5 730,427 732,428 791,427 793,430 823,420 845,436 848,440 849,441 805,470
825,148 822,152 850,150 862,155 880,160 882,165 878,152 918,151 912,182 915,185 840,172 800,180 805,185 808,192 780,175 790,187 848,195 852,197 835,190 785,208 798,228 828,215 830,217 822,205 815,245 845,235 850,240 852,245 862,225 870,232 890,235 892,232 885,205 905,205 920,235 948,205 945,215 945,235 947,240 950,238 915,262 922,265 910,280 932,298 935,302 960,282 985,278 988,280 963,312,9.5 922,322 928,343 993,325 995,250 993,220 996,222 962,140 964,142 995,152 972,173 985,105 978,107 993,73 995,74 990,73 1032,82,12 1020,117 1055,127 1050,142 1045,160 1047,165 1045,170 1010,187 1012,190 1002,193 1040,185 1048,195 1065,195 1068,198 1085,117 1087,120 1099,95 1122,138 1097,164 1102,185 1100,200 1098,207 1083,207 1148,164 1175,134 1143,207 1188,205 1188,236 1045,222 1043,225 1040,240 1050,258 1055,262 1042,284,9 1030,250 1075,262 1082,242 1112,243 1115,245 1117,244 1130,246 1080,297 1082,300 1085,305 1060,315 1027,313 1120,282 1138,284 1167,275 1042,343 1089,343 1133,332 873,314 872,318 872,352 873,354 874,350 993,368 883,394 915,388 918,390 935,388 1050,392 1051,394 1049,392 993,413 1012,425 1018,430 917,431 918,433 916,432 1113,368 1115,372 1126,395 1127,400 1125,396 1158,414` },
  { cls: 'red large', x0: 2790, y0: 790, sx: 3, sy: 3, pts: `
193,56,11.7 300,91,6.3 355,41,6.3 368,152,15 375,146,8 373,146,8
143,115,12 140,110,8 218,98,5 165,122,9 167,124,7 253,125,12 255,125,9 257,124,7 285,140,9.5 285,150,6 150,172,11 145,170,9 130,205,8 112,245,10 205,175,12 235,175,10 205,170,9
218,345,18 222,200,15 160,185,10 228,205,8 250,220,18 270,215,16 298,222,14 305,215,10 330,230,10 345,225,6 340,260,5 210,290,13 190,280,14 240,270,15 200,230,14 185,245,16 195,250,14 222,255,13
332,302,10 320,290,12 300,280,14 285,285,12 310,280,8 315,280,6 62,277,6.3 120,365,17 140,355,14 90,300,8 105,300,12.5 100,290,9 115,310,16 115,330,14 150,300,16 140,295,14 130,300,11 130,300,8 185,350,6 175,330,9 260,350,11 270,370,9 290,358,15 297,352,17
155,440,17 175,440,17 265,440,16 280,430,17 352,425,15 385,495,14 100,505,16 90,500,9 115,505,15 125,505,16 130,500,14 210,445,16 215,440,17 200,500,18 240,500,16
360,545,14 340,550,17 355,575,9 315,590,17 320,595,16 300,570,16 310,570,15 180,590,17 200,600,18 205,620,16 205,610,18 185,615,12 235,565,17 240,560,16 275,560,14
360,500,15 330,490,19 335,490,17 325,487,18 170,520,18 168,543,18 170,540,17 273,470,15 270,472,15` },
  { cls: 'blue', x0: 2640, y0: 250, sx: 3, sy: 3, pts: '446,534 362,681' }
];

const svg = document.getElementById('points');
const ns = 'http://www.w3.org/2000/svg';
for (const b of blocks) {
  const g = document.createElementNS(ns, 'g');
  g.setAttribute('class', b.cls);
  for (const p of b.pts.trim().split(/\s+/)) {
    const [x, y, r = 6] = p.split(',').map(Number);
    const c = document.createElementNS(ns, 'circle');
    c.setAttribute('cx', b.x0 + x / b.sx);
    c.setAttribute('cy', b.y0 + y / b.sy);
    c.setAttribute('r', r);
    g.appendChild(c);
  }
  svg.appendChild(g);
}
```
